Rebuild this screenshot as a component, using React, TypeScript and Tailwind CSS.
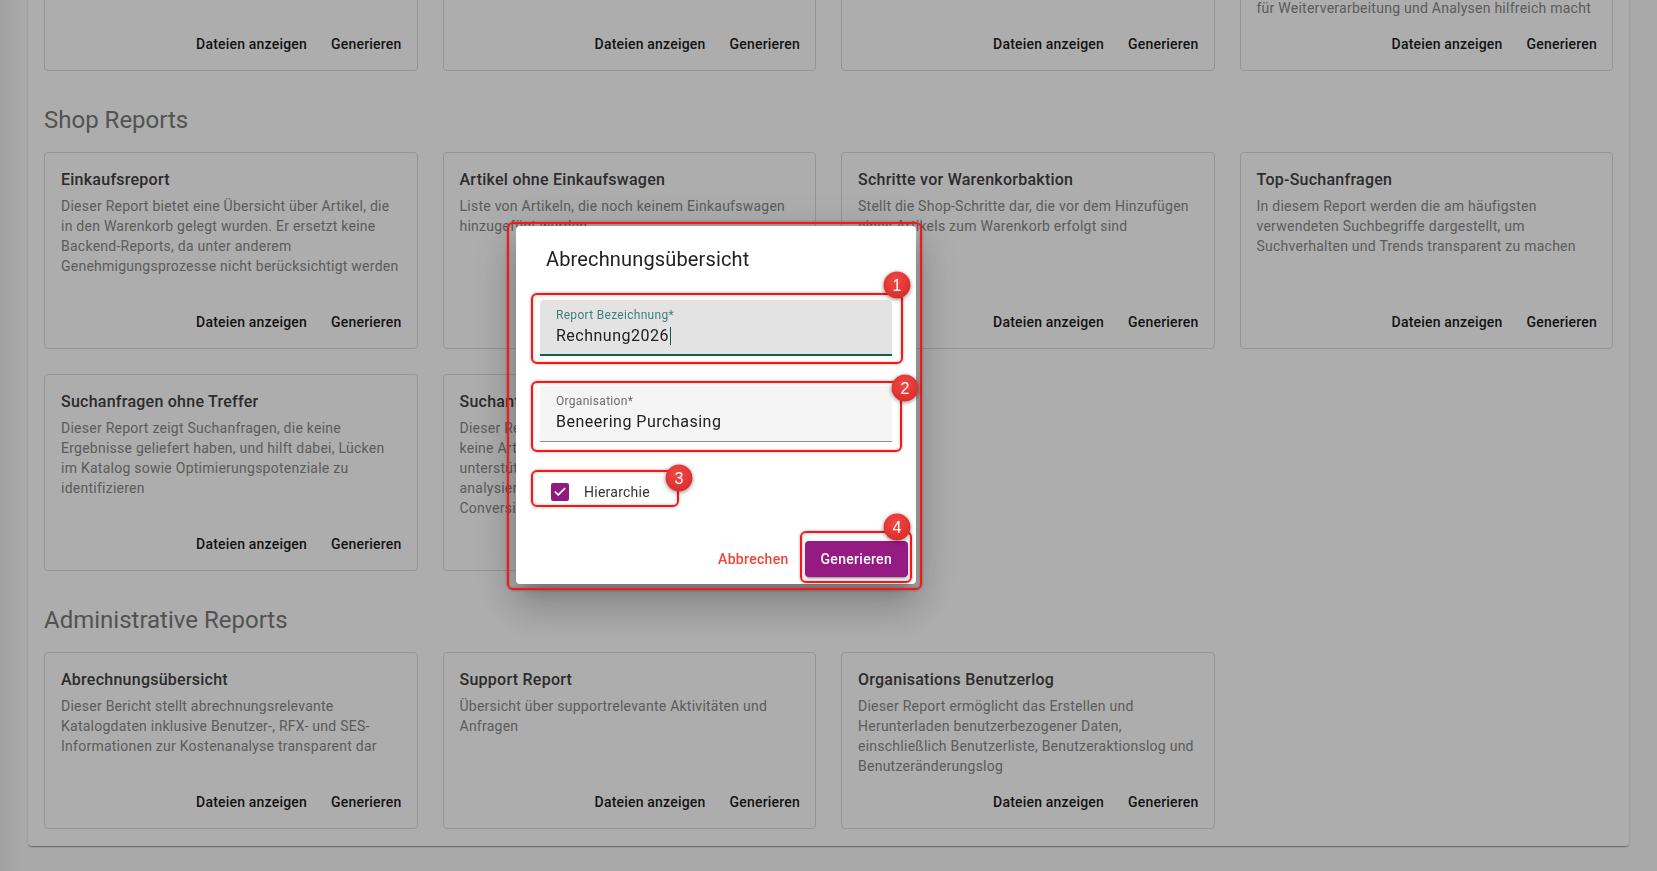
import { Check } from "lucide-react";

type Report = { title: string; text: string };

const katalogReports: Report[] = [
  {
    title: "Katalogübersicht",
    text: "Übersicht aller aktiven Kataloge mit Anzahl der enthaltenen Artikel",
  },
  {
    title: "Preisänderungen",
    text: "Zeigt alle Preisänderungen der Katalogartikel im gewählten Zeitraum",
  },
  {
    title: "Lieferantenübersicht",
    text: "Liste aller Lieferanten inklusive zugeordneter Kataloge und Kontaktdaten",
  },
  {
    title: "Katalogexport",
    text: "Dieser Report exportiert sämtliche Katalogartikel inklusive Preisen, Lieferanten und Warengruppen in eine strukturierte Datei, was den Export besonders für Weiterverarbeitung und Analysen hilfreich macht",
  },
];

const shopReports: Report[] = [
  {
    title: "Einkaufsreport",
    text: "Dieser Report bietet eine Übersicht über Artikel, die in den Warenkorb gelegt wurden. Er ersetzt keine Backend-Reports, da unter anderem Genehmigungsprozesse nicht berücksichtigt werden",
  },
  {
    title: "Artikel ohne Einkaufswagen",
    text: "Liste von Artikeln, die noch keinem Einkaufswagen hinzugefügt wurden",
  },
  {
    title: "Schritte vor Warenkorbaktion",
    text: "Stellt die Shop-Schritte dar, die vor dem Hinzufügen eines Artikels zum Warenkorb erfolgt sind",
  },
  {
    title: "Top-Suchanfragen",
    text: "In diesem Report werden die am häufigsten verwendeten Suchbegriffe dargestellt, um Suchverhalten und Trends transparent zu machen",
  },
  {
    title: "Suchanfragen ohne Treffer",
    text: "Dieser Report zeigt Suchanfragen, die keine Ergebnisse geliefert haben, und hilft dabei, Lücken im Katalog sowie Optimierungspotenziale zu identifizieren",
  },
  {
    title: "Suchanfragen ohne Warenkorb",
    text: "Dieser Report zeigt alle Suchanfragen, bei denen keine Artikel in den Warenkorb gelegt wurden, und unterstützt dabei, Schwachstellen im Sortiment zu analysieren und Maßnahmen zur Steigerung der Conversion abzuleiten",
  },
];

const adminReports: Report[] = [
  {
    title: "Abrechnungsübersicht",
    text: "Dieser Bericht stellt abrechnungsrelevante Katalogdaten inklusive Benutzer-, RFX- und SES-Informationen zur Kostenanalyse transparent dar",
  },
  {
    title: "Support Report",
    text: "Übersicht über supportrelevante Aktivitäten und Anfragen",
  },
  {
    title: "Organisations Benutzerlog",
    text: "Dieser Report ermöglicht das Erstellen und Herunterladen benutzerbezogener Daten, einschließlich Benutzerliste, Benutzeraktionslog und Benutzeränderungslog",
  },
];

const ReportCard = ({ report, height }: { report: Report; height: string }) => (
  <div className={`flex flex-col rounded border border-[#dcdcdc] bg-white ${height}`}>
    <div className="px-4 pt-[15px]">
      <h3 className="text-base leading-6 font-medium tracking-[0.25px] text-[#424242]">{report.title}</h3>
      <p className="mt-1 text-sm leading-5 tracking-[0.25px] text-[#888888]">{report.text}</p>
    </div>
    <div className="mt-auto flex justify-end gap-2 px-[7px] pb-2">
      <button className="h-9 rounded px-2 text-sm font-medium tracking-[0.2px] text-[#1c1c1c]">
        Dateien anzeigen
      </button>
      <button className="h-9 rounded px-2 text-sm font-medium tracking-[0.2px] text-[#1c1c1c]">
        Generieren
      </button>
    </div>
  </div>
);

const Section = ({
  title,
  reports,
  height,
  first,
}: {
  title: string;
  reports: Report[];
  height: string;
  first?: boolean;
}) => (
  <section>
    <h2 className={`${first ? "mt-0" : "mt-[33px]"} mb-4 text-2xl leading-8 text-[#7a7a7a]`}>{title}</h2>
    <div className="grid grid-cols-4 gap-[25px]">
      {reports.map((r) => (
        <ReportCard key={r.title} report={r} height={height} />
      ))}
    </div>
  </section>
);

// red markers drawn over the dialog
const Marker = ({ pos }: { pos: string }) => (
  <div
    className={`pointer-events-none absolute rounded-md border-2 border-[#ff1414] shadow-[0_0_3px_rgba(0,0,0,0.35),inset_0_0_3px_rgba(0,0,0,0.25)] ${pos}`}
  />
);

const Badge = ({ n, pos }: { n: number; pos: string }) => (
  <div
    className={`pointer-events-none absolute flex h-[27px] w-[27px] -translate-x-1/2 -translate-y-1/2 items-center justify-center rounded-full bg-[radial-gradient(circle_at_45%_35%,#f14a45,#d42323)] font-['Liberation_Sans',sans-serif] text-[16px] leading-none text-white shadow-[0_1px_4px_rgba(0,0,0,0.45)] ${pos}`}
  >
    {n}
  </div>
);

const GenerateDialog = () => (
  <div className="fixed left-[516px] top-[226px]">
    <div className="flex w-[400px] flex-col rounded bg-white shadow-[0_11px_15px_-7px_rgba(0,0,0,0.2),0_24px_38px_3px_rgba(0,0,0,0.14),0_9px_46px_8px_rgba(0,0,0,0.12)]">
      <h2 className="pl-[30px] pt-[17px] text-xl leading-8 tracking-[0.15px] text-[#212121]">Abrechnungsübersicht</h2>

      <div className="px-6">
        {/* focused field */}
        <div className="mt-[25px] h-14 rounded-t border-b-2 border-[#175c59] bg-[#e3e3e3] px-4">
          <div className="pt-[7px] text-xs leading-4 tracking-[0.3px] text-[#3d7f7b]">Report Bezeichnung*</div>
          <div className="mt-px text-base leading-6 tracking-[0.5px] text-[#212121]">
            Rechnung2026
            <span className="ml-px inline-block h-[18px] w-px bg-[#175c59] align-[-4px]" />
          </div>
        </div>

        <div className="mt-[30px] h-14 rounded-t border-b border-[#8f8f8f] bg-[#f5f5f5] px-4">
          <div className="pt-[7px] text-xs leading-4 tracking-[0.3px] text-[#6b6b6b]">Organisation*</div>
          <div className="mt-px text-base leading-6 tracking-[0.5px] text-[#212121]">Beneering Purchasing</div>
        </div>

        <label className="mt-[30px] flex h-10 items-center pl-[11px]">
          <span className="flex h-[18px] w-[18px] items-center justify-center rounded-[2px] bg-[#911a7e]">
            <Check className="h-[14px] w-[14px] text-white" strokeWidth={3} />
          </span>
          <span className="pl-[15px] text-sm tracking-[0.25px] text-[#333333]">Hierarchie</span>
        </label>
      </div>

      <div className="mt-[29px] flex items-center justify-end gap-2 pb-[7px] pr-2">
        <button className="h-9 rounded px-2 text-sm font-medium tracking-[0.3px] text-[#f44336]">Abbrechen</button>
        <button className="h-9 rounded bg-[#951a81] px-4 text-sm font-medium tracking-[0.3px] text-white shadow-[0_3px_1px_-2px_rgba(0,0,0,0.2),0_2px_2px_0_rgba(0,0,0,0.14),0_1px_5px_0_rgba(0,0,0,0.12)]">
          Generieren
        </button>
      </div>
    </div>

    <Marker pos="left-[-9px] top-[-4px] w-[415px] h-[368px]" />
    <Marker pos="left-[15px] top-[67px] w-[372px] h-[71px]" />
    <Marker pos="left-[15px] top-[155px] w-[371px] h-[71px]" />
    <Marker pos="left-[15px] top-[244px] w-[148px] h-[37px]" />
    <Marker pos="left-[284px] top-[305px] w-[112px] h-[52px]" />

    <Badge n={1} pos="left-[381px] top-[59px]" />
    <Badge n={2} pos="left-[389px] top-[162px]" />
    <Badge n={3} pos="left-[163px] top-[252px]" />
    <Badge n={4} pos="left-[381px] top-[301px]" />
  </div>
);

export default function App() {
  return (
    <div className="relative h-screen bg-[#fafafa] font-['Roboto','Liberation_Sans',sans-serif]">
      <div
        ref={(el) => {
          if (el) el.scrollTop = 198;
        }}
        className="h-full overflow-y-auto [scrollbar-width:none]"
      >
        <div className="px-[28px] pt-[28px] pb-12">
          <div className="rounded bg-white px-4 pt-4 pb-[17px] shadow-[0_2px_1px_-1px_rgba(0,0,0,0.2),0_1px_1px_0_rgba(0,0,0,0.14),0_1px_3px_0_rgba(0,0,0,0.12)]">
            <Section title="Katalog Reports" reports={katalogReports} height="h-[177px]" first />
            <Section title="Shop Reports" reports={shopReports} height="h-[197px]" />
            <Section title="Administrative Reports" reports={adminReports} height="h-[177px]" />
          </div>
        </div>
      </div>

      {/* sidebar edge shadow */}
      <div className="pointer-events-none absolute inset-y-0 left-0 w-6 bg-gradient-to-r from-black/[0.05] to-transparent" />

      <div className="fixed inset-0 bg-black/[0.32]" />
      <GenerateDialog />
    </div>
  );
}
